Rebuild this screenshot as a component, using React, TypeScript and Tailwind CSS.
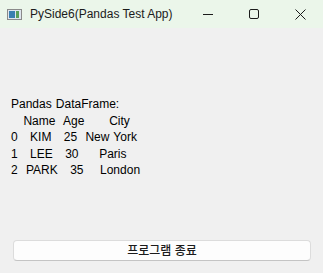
import { FC } from "react";

const rows = [
  "Pandas DataFrame:",
  "   Name  Age      City",
  "0   KIM   25  New York",
  "1   LEE   30     Paris",
  "2  PARK   35    London",
];

const TitleBar: FC = () => {
  return (
    <div className="flex h-[28px] items-center bg-[#ebf6ea] text-[12px] text-[#1b1b1b]">
      <div className="ml-[7px] flex h-[11px] w-[15px] items-stretch border border-[#8a8a8a] bg-[#dfe6ee]">
        <div className="m-[1px] w-[6px] bg-[#3a7fb0]" />
        <div className="my-[1px] w-[3px] bg-[#5aa05a]" />
      </div>
      <span className="ml-[8px]">PySide6(Pandas Test App)</span>
      <div className="ml-auto flex h-full">
        <div className="flex w-[46px] items-center justify-center">
          <svg width="10" height="10" viewBox="0 0 10 10">
            <path d="M0 5.5h10" stroke="#1b1b1b" strokeWidth="1" />
          </svg>
        </div>
        <div className="flex w-[46px] items-center justify-center">
          <svg width="10" height="10" viewBox="0 0 10 10">
            <rect x="0.5" y="0.5" width="9" height="9" rx="1.5" fill="none" stroke="#1b1b1b" strokeWidth="1" />
          </svg>
        </div>
        <div className="flex w-[46px] items-center justify-center">
          <svg width="11" height="11" viewBox="0 0 11 11">
            <path d="M0.5 0.5l10 10M10.5 0.5l-10 10" stroke="#1b1b1b" strokeWidth="1" />
          </svg>
        </div>
      </div>
    </div>
  );
};

const App: FC = () => {
  return (
    <div
      className="flex h-[273px] w-[323px] flex-col bg-[#f0f0f0] text-[#000]"
      style={{ fontFamily: '"Liberation Sans", "Noto Sans CJK KR", sans-serif' }}
    >
      <TitleBar />
      <div className="flex flex-1 flex-col px-[11px]">
        <div className="mt-[68px] whitespace-pre text-[12px] leading-[16.5px] [word-spacing:0.8px]">
          {rows.map((r, i) => (
            <div key={i}>{r}</div>
          ))}
        </div>
        <button className="mt-auto mb-[12px] ml-[2px] h-[21px] w-[298px] rounded-[4px] border border-[#dcdcdc] border-b-[#c4c4c4] bg-[#fdfdfd] text-[12px] font-medium text-[#1b1b1b]">
          프로그램 종료
        </button>
      </div>
    </div>
  );
};

export default App;
